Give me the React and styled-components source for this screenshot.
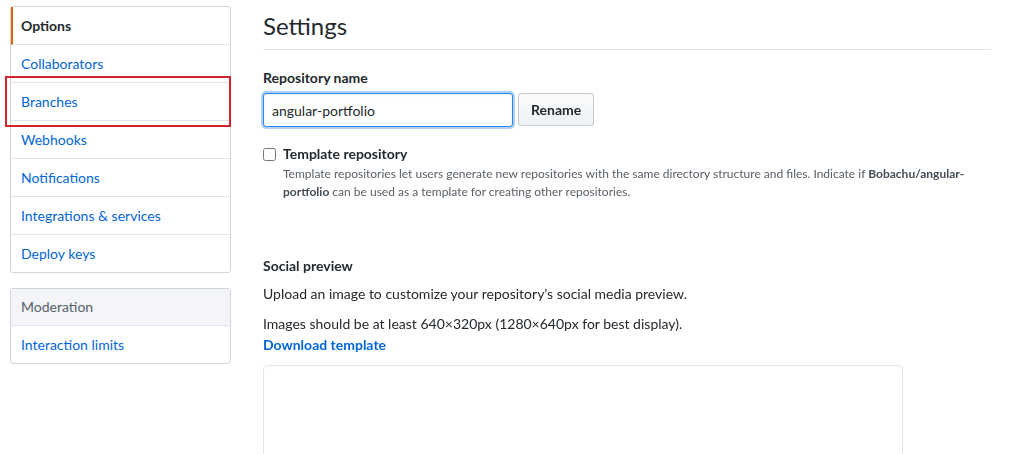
import styled, { createGlobalStyle } from "styled-components";

const GlobalStyle = createGlobalStyle`
  body {
    margin: 0;
    background: #fff;
    font-family: Lato, "Liberation Sans", sans-serif;
    color: #24292e;
  }
`;

const menuItems = [
  "Options",
  "Collaborators",
  "Branches",
  "Webhooks",
  "Notifications",
  "Integrations & services",
  "Deploy keys",
];

function App() {
  return (
    <>
      <GlobalStyle />
      <Page>
        <Sidebar>
          <MenuBox>
            {menuItems.map((label, i) => (
              <MenuItem key={label} selected={i === 0}>
                {label}
              </MenuItem>
            ))}
            <Highlight />
          </MenuBox>
          <MenuBox>
            <MenuHeading>Moderation</MenuHeading>
            <MenuItem>Interaction limits</MenuItem>
          </MenuBox>
        </Sidebar>

        <Main>
          <PageTitle>Settings</PageTitle>

          <Label>Repository name</Label>
          <RenameRow>
            <NameInput defaultValue="angular-portfolio" autoFocus />
            <Button>Rename</Button>
          </RenameRow>

          <CheckRow>
            <Checkbox type="checkbox" />
            <div>
              <CheckTitle>Template repository</CheckTitle>
              <Note>
                Template repositories let users generate new repositories with the
                same directory structure and files. Indicate if{" "}
                <strong>Bobachu/angular-portfolio</strong> can be used as a template
                for creating other repositories.
              </Note>
            </div>
          </CheckRow>

          <Section>
            <Label wide>Social preview</Label>
            <Text>Upload an image to customize your repository’s social media preview.</Text>
            <Text tight>
              Images should be at least 640×320px (1280×640px for best display).
            </Text>
            <Link>Download template</Link>
            <PreviewBox />
          </Section>
        </Main>
      </Page>
    </>
  );
}

const Page = styled.div`
  display: flex;
  align-items: flex-start;
  padding: 6px 0 0 10px;
  height: 448px;
  overflow: hidden;
`;

const Sidebar = styled.div`
  width: 221px;
  flex-shrink: 0;
  display: flex;
  flex-direction: column;
  gap: 15px;
`;

const MenuBox = styled.ul`
  position: relative;
  list-style: none;
  margin: 0;
  padding: 0;
  border: 1px solid #d1d5da;
  border-radius: 3px;
  background: #fff;
`;

const MenuItem = styled.li`
  display: block;
  padding: 8px 10px;
  font-size: 14px;
  line-height: 21px;
  color: ${(p) => (p.selected ? "#24292e" : "#0366d6")};
  font-weight: ${(p) => (p.selected ? 700 : 400)};
  border-bottom: 1px solid #e1e4e8;
  border-left: ${(p) => (p.selected ? "2px solid #e36209" : "none")};
  padding-left: ${(p) => (p.selected ? "8px" : "10px")};
  &:last-of-type {
    border-bottom: none;
  }
`;

const MenuHeading = styled.li`
  padding: 8px 10px;
  font-size: 14px;
  line-height: 20px;
  color: #586069;
  background: #f3f5f8;
  border-bottom: 1px solid #e1e4e8;
`;

const Highlight = styled.div`
  position: absolute;
  left: -6px;
  top: 69px;
  width: 226px;
  height: 51px;
  border: 2px solid #d2252f;
  box-sizing: border-box;
  pointer-events: none;
`;

const Main = styled.div`
  width: 728px;
  margin-left: 32px;
`;

const PageTitle = styled.h2`
  margin: 0 0 18px;
  padding: 6px 0 9px;
  font-size: 24px;
  line-height: 28px;
  font-weight: 400;
  border-bottom: 1px solid #e1e4e8;
`;

const Label = styled.div`
  font-size: 14px;
  font-weight: 700;
  line-height: 20px;
  margin-bottom: ${(p) => (p.wide ? "8px" : "5px")};
`;

const RenameRow = styled.div`
  display: flex;
  gap: 5px;
  align-items: flex-start;
`;

const NameInput = styled.input`
  box-sizing: border-box;
  width: 250px;
  height: 34px;
  padding: 6px 8px;
  font-family: inherit;
  font-size: 14px;
  color: #24292e;
  border: 1px solid #2188ff;
  border-radius: 3px;
  outline: none;
  box-shadow: inset 0 1px 2px rgba(27, 31, 35, 0.075),
    0 0 0 2px rgba(3, 102, 214, 0.3);
`;

const Button = styled.button`
  box-sizing: border-box;
  height: 33px;
  padding: 0 12px;
  font-family: inherit;
  font-size: 14px;
  font-weight: 700;
  color: #24292e;
  background: linear-gradient(-180deg, #fafbfc, #eff3f6 90%);
  border: 1px solid rgba(27, 31, 35, 0.2);
  border-radius: 3px;
`;

const CheckRow = styled.div`
  display: flex;
  gap: 7px;
  margin-top: 17px;
`;

const Checkbox = styled.input`
  width: 13px;
  height: 13px;
  margin: 4px 0 0;
  flex-shrink: 0;
`;

const CheckTitle = styled.div`
  font-size: 14px;
  font-weight: 700;
  line-height: 20px;
`;

const Note = styled.p`
  margin: 1px 0 0;
  font-size: 12px;
  line-height: 18px;
  color: #586069;
  strong {
    color: #444d56;
  }
`;

const Section = styled.div`
  margin-top: 55px;
`;

const Text = styled.p`
  margin: 0 0 ${(p) => (p.tight ? "0" : "10px")};
  font-size: 14px;
  line-height: 20px;
`;

const Link = styled.a`
  display: block;
  margin-top: 1px;
  font-size: 14px;
  font-weight: 700;
  line-height: 20px;
  color: #0366d6;
`;

const PreviewBox = styled.div`
  box-sizing: border-box;
  width: 640px;
  height: 200px;
  margin-top: 10px;
  border: 1px solid #e1e4e8;
  border-radius: 4px;
`;

export default App;
